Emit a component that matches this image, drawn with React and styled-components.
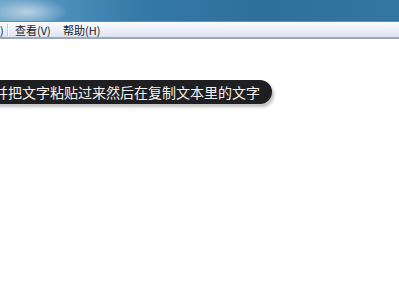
import React from "react";
import styled, { createGlobalStyle } from "styled-components";

const GlobalStyle = createGlobalStyle`
  html, body {
    margin: 0;
    padding: 0;
    background: #ffffff;
  }
  body {
    width: 399px;
    height: 300px;
    overflow: hidden;
    font-family: "Noto Sans CJK SC", "Liberation Sans", sans-serif;
  }
`;

const Window = styled.div`
  display: flex;
  flex-direction: column;
  width: 399px;
  height: 300px;
  background: #fff;
  overflow: hidden;
`;

const TitleBar = styled.div`
  height: 21px;
  background:
    radial-gradient(ellipse 40px 14px at 28px 12px, rgba(255, 255, 255, 0.55), rgba(255, 255, 255, 0) 100%),
    linear-gradient(90deg, #6fa6c9 0px, #4f8fbb 60px, #3579a8 140px, #2f6f9e 260px, #3476a3 399px);
  border-bottom: 1px solid #5d8fb0;
`;

const MenuBar = styled.div`
  display: flex;
  align-items: center;
  height: 14px;
  background: linear-gradient(180deg, #f7f9fd 0%, #eef1fa 45%, #dde2f1 100%);
  border-top: 1px solid #ffffff;
  border-bottom: 2px solid #9ea7b5;
`;

const MenuItem = styled.div`
  display: flex;
  align-items: center;
  height: 100%;
  width: ${(p) => p.$width}px;
  font-size: 11px;
  line-height: 14px;
  color: #1a1a1a;
  white-space: nowrap;
`;

const Separator = styled.div`
  width: 1px;
  height: 12px;
  margin: 0 7px 0 3px;
  background: #c3c8d4;
  box-shadow: 1px 0 0 #ffffff;
`;

const Content = styled.div`
  flex: 1;
  padding-top: 40px;
`;

const Tooltip = styled.div`
  display: inline-flex;
  align-items: center;
  height: 24px;
  margin-left: -18px;
  padding: 0 12px 0 12px;
  background: #1f1f21;
  border-radius: 0 13px 13px 0;
  box-shadow: 1px 2px 0 #c8c8c8, 2px 3px 3px rgba(0, 0, 0, 0.25);
  color: #f4f4f4;
  font-size: 14px;
  white-space: nowrap;
`;

export default function App() {
  return (
    <Window>
      <GlobalStyle />
      <TitleBar />
      <MenuBar>
        <MenuItem $width={4}>)</MenuItem>
        <Separator />
        <MenuItem $width={48}>查看(V)</MenuItem>
        <MenuItem $width={48}>帮助(H)</MenuItem>
      </MenuBar>
      <Content>
        <Tooltip>并把文字粘贴过来然后在复制文本里的文字</Tooltip>
      </Content>
    </Window>
  );
}
